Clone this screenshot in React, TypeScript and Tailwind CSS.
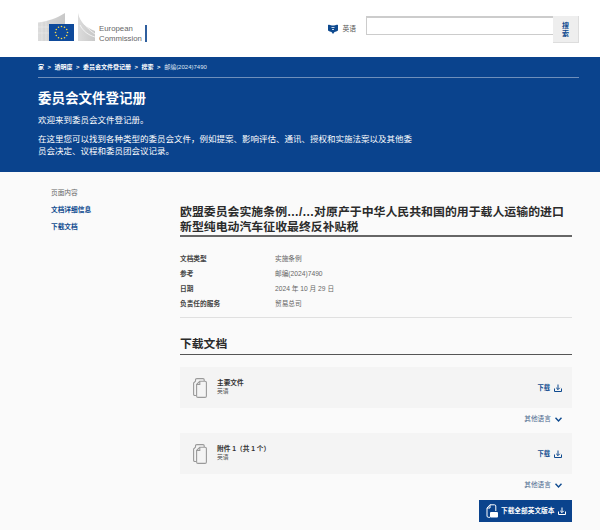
import React from "react";

const font = "font-['Liberation_Sans','Noto_Sans_CJK_SC',sans-serif]";

const Logo = () => (
  <div className="flex items-end gap-[3px]">
    <svg width="58" height="29" viewBox="0 0 58 29">
      <defs>
        <linearGradient id="wing" x1="0" y1="0" x2="1" y2="0">
          <stop offset="0" stopColor="#dcdcdc" />
          <stop offset="1" stopColor="#c8c8c8" />
        </linearGradient>
      </defs>
      <path d="M0 9.5 C10 8.5 19 5 27 0 L27 11 L11 11 L11 28 L0 28 Z" fill="url(#wing)" />
      <path d="M40 0 C42 10 49 15 57 18 L57 28 L40 28 Z" fill="url(#wing)" />
      <path d="M44 6 C46 12 51 17 57 21 M42 12 C45 18 50 22 57 24" stroke="#ffffff" strokeWidth="0.7" fill="none" />
      <path d="M4 9 L4 28 M8 8 L8 28 M0 14 L11 14 M0 20 L11 20" stroke="#efefef" strokeWidth="0.5" fill="none" />
      <rect x="11" y="11" width="25" height="17" fill="#0e4a9b" />
      {Array.from({ length: 12 }).map((_, i) => {
        const a = (i * Math.PI) / 6;
        return (
          <circle
            key={i}
            cx={23.5 + Math.cos(a) * 6}
            cy={19.5 + Math.sin(a) * 6}
            r="0.8"
            fill="#f7d94c"
          />
        );
      })}
    </svg>
    <div className="flex items-end gap-[3px]">
      <div className="text-[7.8px] leading-[9.5px] text-[#666666] -mb-[1px]">
        <div>European</div>
        <div>Commission</div>
      </div>
      <div className="w-[2px] h-[17px] bg-[#2f5f9e]" />
    </div>
  </div>
);

const LangIcon = () => (
  <svg width="10" height="10" viewBox="0 0 10 10" fill="#0e4a8f">
    <path d="M0 1 C1.5 0 3 1.5 5 1.5 C7 1.5 8.5 0 10 1 L10 6.5 C9 7.5 7.5 7.5 6.5 8 L5 10 L3.5 8 C2.5 7.5 1 7.5 0 6.5 Z" />
    <rect x="3.5" y="3" width="3" height="1" fill="#c9d6e8" />
    <rect x="4" y="5" width="2" height="1" fill="#c9d6e8" />
  </svg>
);

const DocsIcon = () => (
  <svg width="14" height="20" viewBox="0 0 14 20" fill="none" stroke="#9a9a9a" strokeWidth="1.1">
    <path d="M2.5 3.5 V1.8 C2.5 1 3 0.6 3.8 0.6 H10 C10.8 0.6 11.2 1 11.2 1.8 V3" />
    <path d="M3 17.5 H1.8 C1 17.5 0.6 17 0.6 16.2 V5 L2.5 3.2" />
    <path d="M3.6 6.5 L6.8 3.2 H12 C12.8 3.2 13.4 3.7 13.4 4.5 V18 C13.4 18.8 12.8 19.4 12 19.4 H5 C4.2 19.4 3.6 18.8 3.6 18 Z" fill="#f4f4f4" />
    <path d="M3.6 6.5 H6.8 V3.2" />
  </svg>
);

const DownloadIcon = ({ color }: { color: string }) => (
  <svg width="8" height="8" viewBox="0 0 8 8" fill="none" stroke={color} strokeWidth="1">
    <path d="M4 0.5 V5.5 M2.2 3.8 L4 5.6 L5.8 3.8" />
    <path d="M0.5 4.5 V7.5 H7.5 V4.5" />
  </svg>
);

const SmallChevron = () => (
  <svg width="7" height="5" viewBox="0 0 7 5" fill="none" stroke="#0e4a8f" strokeWidth="1.4">
    <path d="M0.5 0.7 L3.5 3.9 L6.5 0.7" />
  </svg>
);

const ZipIcon = () => (
  <svg width="12" height="14" viewBox="0 0 12 14" fill="none" stroke="#ffffff" strokeWidth="1">
    <path d="M1 4 L4 0.8 H8.5 C9.3 0.8 9.8 1.3 9.8 2 V7" />
    <path d="M1 4 H4 V0.8" />
    <path d="M1 4 V12 C1 12.8 1.5 13.3 2.3 13.3 H4" />
    <rect x="4" y="8" width="8" height="5.5" rx="1" fill="#ffffff" stroke="none" />
  </svg>
);

const rows = [
  ["文档类型", "实施条例"],
  ["参考", "邮编(2024)7490"],
  ["日期", "2024 年 10 月 29 日"],
  ["负责任的服务", "贸易总司"],
];

const DocCard = ({ title }: { title: string }) => (
  <>
    <div className="h-[41px] bg-[#f4f4f4] flex items-center pl-[13px] pr-[10px]">
      <DocsIcon />
      <div className="ml-[10px] flex-1 -mt-[1px]">
        <div className="text-[6.7px] leading-[9px] font-bold text-[#333333]">{title}</div>
        <div className="text-[5.8px] leading-[9px] text-[#555555]">英语</div>
      </div>
      <div className="flex items-center gap-[4px] text-[6.3px] font-bold text-[#0e4a8f]">
        下载
        <DownloadIcon color="#0e4a8f" />
      </div>
    </div>
    <div className="h-[25px] pb-[2px] flex items-center justify-end gap-[4px] pr-[10px] text-[6.7px] text-[#4d6a8f]">
      其他语言
      <SmallChevron />
    </div>
  </>
);

export default function App() {
  return (
    <div className={`${font} w-[600px] h-[530px] overflow-hidden bg-[#fafafa]`}>
      {/* Header */}
      <header className="h-[57px] bg-white pl-[38px] pr-[21px] flex items-start justify-between">
        <div className="pt-[13px]">
          <Logo />
        </div>
        <div className="flex items-start pt-[16px]">
          <div className="flex items-center gap-[4px] mt-[8px] mr-[10px]">
            <LangIcon />
            <span className="text-[6.8px] text-[#555555]">英语</span>
          </div>
          <div className="w-[187px] h-[19px] bg-white border border-[#cccccc] border-t-2 border-r-0" />
          <div className="w-[26px] h-[27px] pt-[1px] bg-[#eeeeee] border-b border-r border-[#dddddd] flex items-center justify-center text-center text-[7px] leading-[8px] font-bold text-[#0e4a8f]">
            搜<br />索
          </div>
        </div>
      </header>

      {/* Hero */}
      <section className="h-[115px] bg-[#0a438d] pl-[38px] pr-[21px] text-white">
        <div className="h-[21px] border-b border-[#6f8fbb] flex items-center gap-[3.5px] text-[6px] font-bold">
          <span>家</span>
          <span>&gt;</span>
          <span>透明度</span>
          <span>&gt;</span>
          <span>委员会文件登记册</span>
          <span>&gt;</span>
          <span>搜索</span>
          <span>&gt;</span>
          <span className="font-normal text-[#dfe7f2]">邮编(2024)7490</span>
        </div>
        <h1 className="mt-[11px] text-[13.5px] leading-[20px] font-bold">委员会文件登记册</h1>
        <p className="mt-[5px] text-[8.5px] leading-[12px]">欢迎来到委员会文件登记册。</p>
        <p className="mt-[7px] w-[378px] text-[8.5px] leading-[12px]">
          在这里您可以找到各种类型的委员会文件，例如提案、影响评估、通讯、授权和实施法案以及其他委员会决定、议程和委员团会议记录。
        </p>
      </section>

      {/* Body */}
      <div className="flex pl-[51px] pr-[28px]">
        <aside className="w-[129px] pt-[16px] text-[6.7px]">
          <div className="text-[#666666] leading-[9px]">页面内容</div>
          <div className="mt-[8px] font-bold text-[#0e4a8f] leading-[9px]">文档详细信息</div>
          <div className="mt-[8px] font-bold text-[#0e4a8f] leading-[9px]">下载文档</div>
        </aside>
        <main className="flex-1 pt-[33px]">
          <h2 className="text-[11.9px] leading-[15px] font-bold text-[#2b2b2b] border-b-2 border-[#666666] h-[32px]">
            欧盟委员会实施条例…/…对原产于中华人民共和国的用于载人运输的进口新型纯电动汽车征收最终反补贴税
          </h2>
          <div className="mt-[15px] pb-[5px] border-b border-[#e0e0e0] text-[6.7px]">
            {rows.map(([k, v]) => (
              <div key={k} className="flex h-[15px] items-center">
                <div className="w-[95px] font-bold text-[#444444]">{k}</div>
                <div className="text-[#666666]">{v}</div>
              </div>
            ))}
          </div>
          <h2 className="mt-[18px] h-[19px] text-[11.8px] leading-[16px] font-bold text-[#2b2b2b] border-b border-[#555555]">
            下载文档
          </h2>
          <div className="mt-[12px]">
            <DocCard title="主要文件" />
            <DocCard title="附件 1（共 1 个）" />
          </div>
          <div className="mt-[1px] flex justify-end">
            <div className="w-[93px] h-[22px] bg-[#0a438d] flex items-center pl-[7px] gap-[3px] text-[6.7px] font-bold text-white">
              <ZipIcon />
              <span>下载全部英文版本</span>
              <DownloadIcon color="#ffffff" />
            </div>
          </div>
        </main>
      </div>
    </div>
  );
}
